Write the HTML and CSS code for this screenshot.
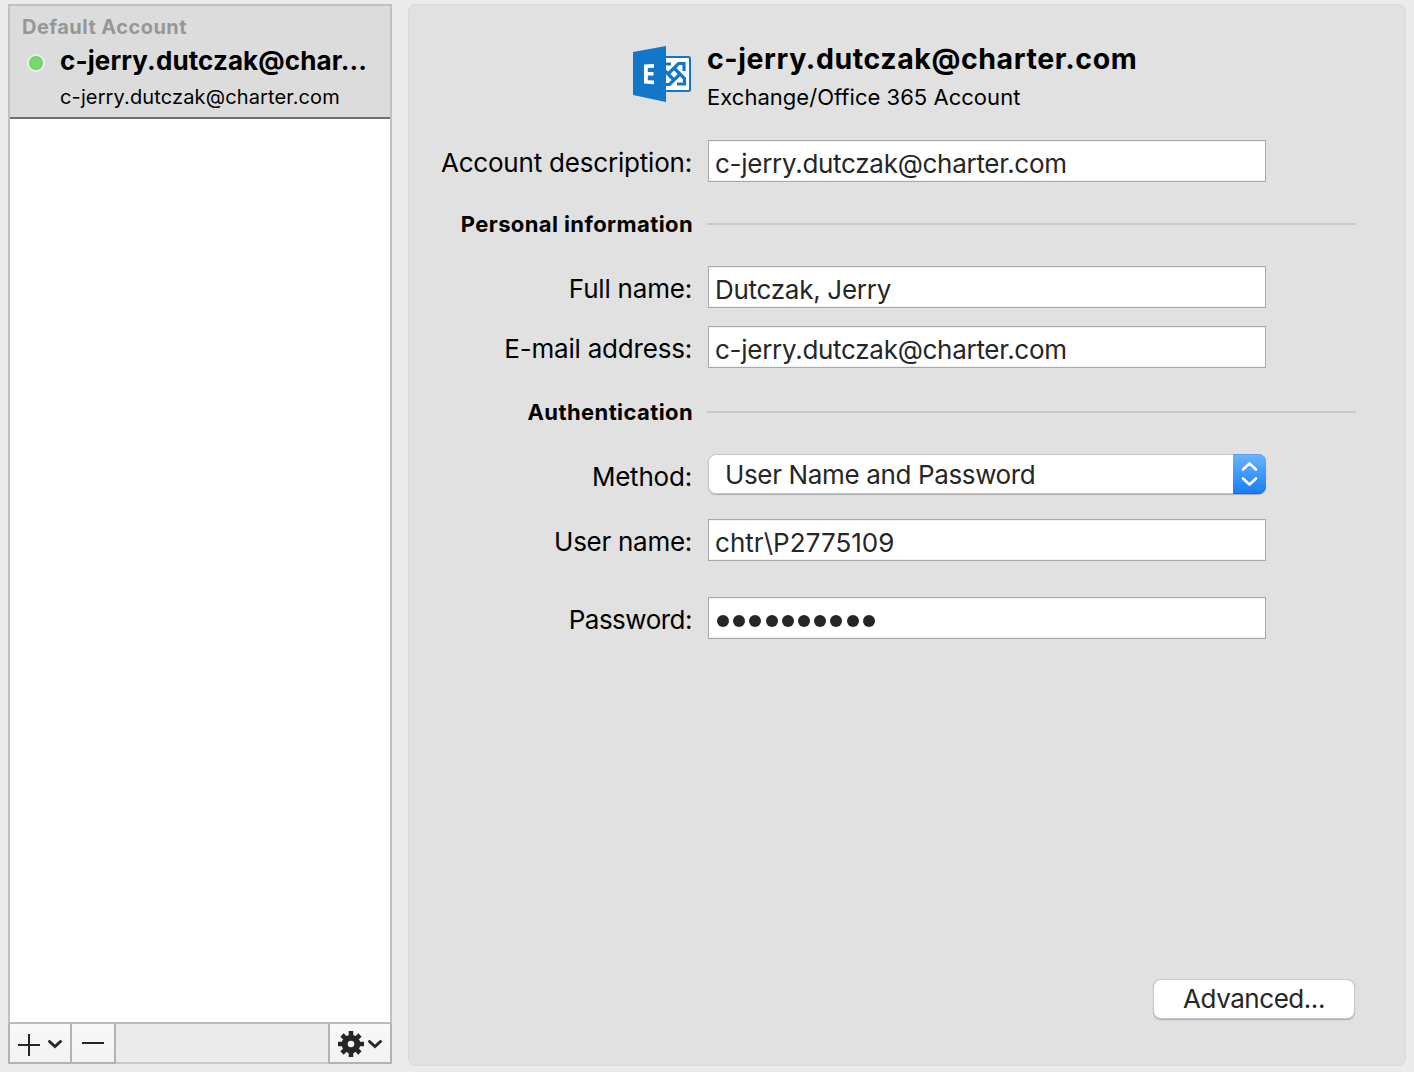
FILE: index.html
```html
<!DOCTYPE html>
<html lang="en">
<head>
<meta charset="utf-8">
<title>Accounts</title>
<link rel="stylesheet" href="styles.css">
</head>
<body>
<main class="window">
  <aside class="sidebar">
    <div class="account">
      <div class="group-title"><span>Default Account</span></div>
      <div class="account-name"><i class="status"></i><span>c-jerry.dutczak@char...</span></div>
      <div class="account-mail"><span>c-jerry.dutczak@charter.com</span></div>
    </div>
    <div class="account-space"></div>
    <div class="toolbar">
      <button class="tool tool-add" aria-label="Add account">
        <svg width="60" height="38" viewBox="0 0 60 38" fill="none" stroke="#262626"><path d="M8 21H30M19 10V32" stroke-width="2"/><path d="M39.500 17.500L45 22.500L50.500 17.500" stroke-width="3" stroke-linecap="round"/></svg>
      </button>
      <button class="tool tool-remove" aria-label="Remove account">
        <svg width="42" height="38" viewBox="0 0 42 38" fill="none" stroke="#262626"><path d="M10 19H32" stroke-width="2"/></svg>
      </button>
      <div class="tool-space"></div>
      <button class="tool tool-gear" aria-label="Options">
        <svg width="60" height="38" viewBox="0 0 60 38" fill="none" stroke="#262626"><circle cx="21" cy="20" r="6.300" stroke-width="6"/><g stroke-width="4.600"><path d="M21 7V12.500M21 27.500V33M8 20H13.500M28.500 20H34"/><path d="M12 11L15.700 14.700M26.300 25.300L30 29M30 11L26.300 14.700M15.700 25.300L12 29"/></g><path d="M39.500 17.500L45 22.500L50.500 17.500" stroke-width="3" stroke-linecap="round"/></svg>
      </button>
    </div>
  </aside>
  <section class="panel">
    <header class="head">
      <svg class="logo" width="58" height="56" viewBox="0 0 58 56">
        <defs><path id="arm" d="M51 25V17.500H45.500L35.500 27.500"/></defs>
        <rect x="28" y="11" width="29" height="34" rx="1.500" fill="#fff" stroke="#1277c8" stroke-width="2"/>
        <g fill="none" stroke="#1277c8" stroke-width="3.200">
          <use href="#arm"/>
          <use href="#arm" transform="rotate(90 41 28)"/>
          <use href="#arm" transform="rotate(180 41 28)"/>
          <use href="#arm" transform="rotate(270 41 28)"/>
        </g>
        <path d="M0 6L33 0V56L0 49Z" fill="#1277c8"/>
        <path d="M11 18.600L21 18V21.700L14.800 21.900V26L20.500 25.900V29.500L14.800 29.400V34.200L21 34.600V38.300L11 37.600Z" fill="#fff"/>
      </svg>
      <div class="head-text">
        <h1><span>c-jerry.dutczak@charter.com</span></h1>
        <p><span>Exchange/Office 365 Account</span></p>
      </div>
    </header>
    <div class="row row-description"><span class="label">Account description:</span><div class="field"><span>c-jerry.dutczak@charter.com</span></div></div>
    <div class="row section section-personal"><h2>Personal information</h2><div class="rule"></div></div>
    <div class="row row-name"><span class="label">Full name:</span><div class="field"><span>Dutczak, Jerry</span></div></div>
    <div class="row row-mail"><span class="label">E-mail address:</span><div class="field"><span>c-jerry.dutczak@charter.com</span></div></div>
    <div class="row section section-auth"><h2>Authentication</h2><div class="rule"></div></div>
    <div class="row row-method"><span class="label">Method:</span>
      <div class="select"><span>User Name and Password</span>
        <div class="stepper"><svg width="33" height="40" viewBox="0 0 33 40" fill="none" stroke="#fff" stroke-width="2.600" stroke-linecap="round" stroke-linejoin="round"><path d="M10 15.500L16.500 9.500L23 15.500M10 24.500L16.500 30.500L23 24.500"/></svg></div>
      </div>
    </div>
    <div class="row row-user"><span class="label">User name:</span><div class="field"><span>chtr\P2775109</span></div></div>
    <div class="row row-password"><span class="label">Password:</span><div class="field dots"><i></i><i></i><i></i><i></i><i></i><i></i><i></i><i></i><i></i><i></i></div></div>
    <footer class="foot"><button class="advanced"><span>Advanced...</span></button></footer>
  </section>
</main>
</body>
</html>
```
FILE: styles.css
```css
* { box-sizing: border-box; }
body { margin: 0; background: #ebebeb; font-family: Inter, "Liberation Sans", sans-serif; color: #000; }
h1, h2, p { margin: 0; }
button { font: inherit; padding: 0; margin: 0; border: 0; }
svg { display: block; }
span, h2 { white-space: nowrap; }

.window { display: flex; gap: 16px; width: 1414px; height: 1072px; padding: 4px 8px 0; }

.sidebar { display: flex; flex-direction: column; width: 384px; height: 1060px; border: 2px solid #c1c1c1; border-bottom: 0; background: #fff; }
.account { height: 113px; background: #dcdcdc; border-bottom: 2px solid #6f6f6f; padding-top: 8px; }
.group-title { height: 26px; line-height: 26px; padding-left: 12px; font-size: 20px; font-weight: 700; color: #979797; letter-spacing: .45px; }
.account-name { display: flex; align-items: center; height: 40px; padding-left: 17px; font-size: 26px; font-weight: 700; letter-spacing: .1px; }
.status { width: 18px; height: 18px; margin: 5px 15px 0 0; border-radius: 50%; border: 2px solid #ededed; background: #79d96c; box-shadow: inset 0 0 0 1px #6bc65f; }
.account-mail { height: 34px; line-height: 34px; padding-left: 50px; font-size: 20px; letter-spacing: .13px; }
.account-space { flex: 1; }
.toolbar { display: flex; height: 42px; margin: 0 -2px; border-top: 2px solid #bcbcbc; background: #ebebeb; }
.tool { border: 2px solid #b3b3b3; border-top: 0; background: linear-gradient(#f9f9f9, #f2f2f2); }
.tool-add { width: 64px; }
.tool-remove { width: 44px; border-left: 0; }
.tool-space { flex: 1; border-bottom: 2px solid #c9c9c9; }
.tool-gear { width: 64px; }

.panel { display: flex; flex-direction: column; width: 998px; height: 1062px; border: 1px solid #d9d9d9; border-radius: 8px; background: #e1e1e1; }
.head { display: flex; height: 135px; padding: 41px 0 0 224px; gap: 16px; }
.head h1 { height: 30px; margin-top: -2px; line-height: 30px; font-size: 28.5px; font-weight: 700; letter-spacing: .58px; }
.head p { height: 28px; line-height: 28px; margin-top: 9px; font-size: 22px; letter-spacing: .03px; }
.row { display: grid; grid-template-columns: 283px 558px; column-gap: 16px; height: 42px; align-items: start; font-size: 26px; letter-spacing: -.28px; }
.label { justify-self: end; height: 42px; line-height: 44px; padding-top: 1px; letter-spacing: -.2px; }
.field { display: flex; align-items: center; height: 42px; padding: 4px 0 0 6px; border: 1px solid #a9a9a9; background: #fff; box-shadow: inset 0 1px #f1f1f1, inset 0 -1px #f1f1f1; color: #262626; }
.section { grid-template-columns: 284px 649px; column-gap: 14px; height: 28px; align-items: center; }
.section h2 { justify-self: end; font-size: 22px; line-height: 28px; font-weight: 700; letter-spacing: .4px; }
.rule { height: 2px; background: #c9c9c9; }
.section-personal { margin-top: 28px; }
.row-name { margin-top: 28px; }
.row-mail { margin-top: 18px; }
.section-auth { margin-top: 30px; }
.row-method { margin-top: 28px; height: 40px; letter-spacing: -.36px; }
.row-user { margin-top: 25px; }
.row-user .label { letter-spacing: -.28px; }
.row-user .field { letter-spacing: .04px; }
.row-password { margin-top: 36px; }
.row-password .label { letter-spacing: -.5px; }
.select { display: flex; align-items: center; justify-content: space-between; height: 40px; padding-left: 17px; border-radius: 8px; background: #fff; box-shadow: inset 0 0 0 1px #c4c4c4, 0 1px 1px #aaa; color: #262626; }
.stepper { width: 33px; height: 40px; border-radius: 0 8px 8px 0; background: linear-gradient(#6db3fa, #157efb); box-shadow: inset 0 1px #5ba1ef, inset 0 -1px #116be0; }
.dots { justify-content: flex-start; gap: 4.200px; padding: 5px 0 0 8px; }
.dots i { width: 12px; height: 12px; border-radius: 50%; background: #262626; }
.foot { display: flex; justify-content: flex-end; margin-top: auto; padding: 0 51px 47px 0; }
.advanced { width: 200px; height: 38px; padding-bottom: 2px; border-radius: 7px; background: #fff; box-shadow: 0 0 0 1px #c8c8c8, 0 1px 1px 1px #aaa; font-size: 26px; letter-spacing: -.45px; color: #262626; }
```
